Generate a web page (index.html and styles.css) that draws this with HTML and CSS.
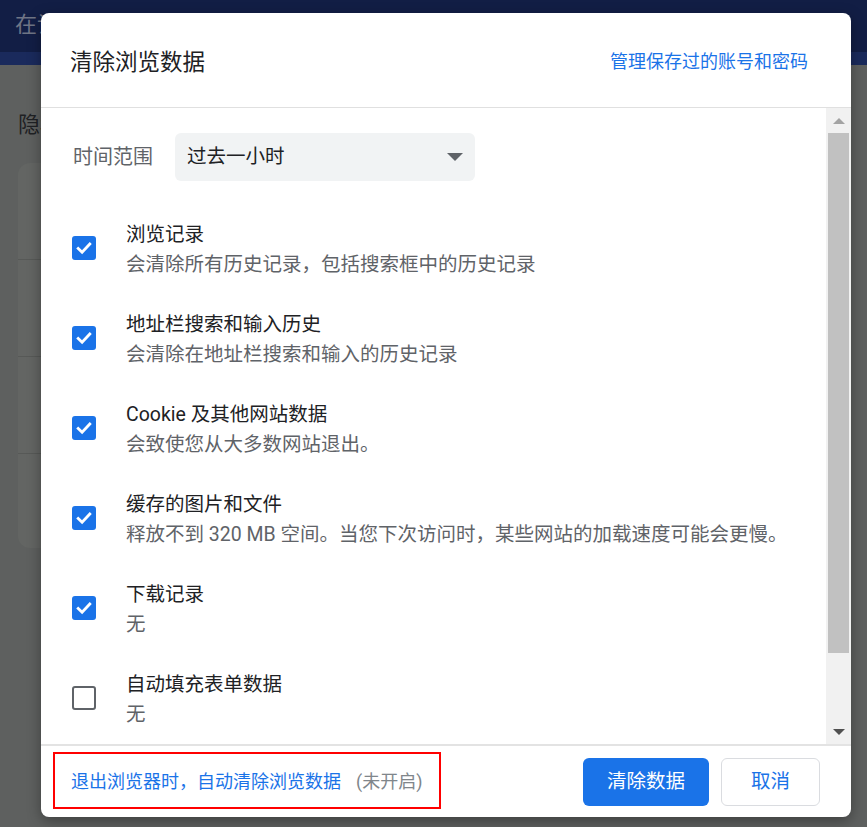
FILE: index.html
```html
<!DOCTYPE html>
<html lang="zh-CN">
<head>
<meta charset="utf-8">
<title>清除浏览数据</title>
<link rel="stylesheet" href="styles.css">
</head>
<body>
<div class="page">
  <header class="topbar"><span class="search-hint">在设</span></header>
  <div class="topbar-strip"></div>
  <main class="content">
    <h2 class="section-title">隐私和安全</h2>
    <div class="card">
      <div class="card-row"></div>
      <div class="card-row"></div>
      <div class="card-row"></div>
      <div class="card-row last"></div>
    </div>
  </main>
</div>

<div class="dialog" role="dialog">
  <div class="dialog-header">
    <h1 class="dialog-title">清除浏览数据</h1>
    <a class="header-link">管理保存过的账号和密码</a>
  </div>

  <div class="dialog-body">
    <div class="scroll-content">
      <div class="time-row">
        <span class="time-label">时间范围</span>
        <div class="select">
          <span>过去一小时</span>
          <span class="select-arrow"></span>
        </div>
      </div>

      <div class="items">
        <div class="item">
          <span class="checkbox checked"><svg viewBox="0 0 24 24" width="24" height="24"><path d="M6.2 12.4l3.9 3.8 7.7-8.2" fill="none" stroke="#fff" stroke-width="2.8" stroke-linecap="square"/></svg></span>
          <div class="item-text">
            <div class="item-title">浏览记录</div>
            <div class="item-sub">会清除所有历史记录，包括搜索框中的历史记录</div>
          </div>
        </div>
        <div class="item">
          <span class="checkbox checked"><svg viewBox="0 0 24 24" width="24" height="24"><path d="M6.2 12.4l3.9 3.8 7.7-8.2" fill="none" stroke="#fff" stroke-width="2.8" stroke-linecap="square"/></svg></span>
          <div class="item-text">
            <div class="item-title">地址栏搜索和输入历史</div>
            <div class="item-sub">会清除在地址栏搜索和输入的历史记录</div>
          </div>
        </div>
        <div class="item">
          <span class="checkbox checked"><svg viewBox="0 0 24 24" width="24" height="24"><path d="M6.2 12.4l3.9 3.8 7.7-8.2" fill="none" stroke="#fff" stroke-width="2.8" stroke-linecap="square"/></svg></span>
          <div class="item-text">
            <div class="item-title">Cookie 及其他网站数据</div>
            <div class="item-sub">会致使您从大多数网站退出。</div>
          </div>
        </div>
        <div class="item">
          <span class="checkbox checked"><svg viewBox="0 0 24 24" width="24" height="24"><path d="M6.2 12.4l3.9 3.8 7.7-8.2" fill="none" stroke="#fff" stroke-width="2.8" stroke-linecap="square"/></svg></span>
          <div class="item-text">
            <div class="item-title">缓存的图片和文件</div>
            <div class="item-sub">释放不到 320 MB 空间。当您下次访问时，某些网站的加载速度可能会更慢。</div>
          </div>
        </div>
        <div class="item">
          <span class="checkbox checked"><svg viewBox="0 0 24 24" width="24" height="24"><path d="M6.2 12.4l3.9 3.8 7.7-8.2" fill="none" stroke="#fff" stroke-width="2.8" stroke-linecap="square"/></svg></span>
          <div class="item-text">
            <div class="item-title">下载记录</div>
            <div class="item-sub">无</div>
          </div>
        </div>
        <div class="item">
          <span class="checkbox"></span>
          <div class="item-text">
            <div class="item-title">自动填充表单数据</div>
            <div class="item-sub">无</div>
          </div>
        </div>
      </div>
    </div>

    <div class="scrollbar">
      <div class="sb-button"><span class="sb-arrow up"></span></div>
      <div class="sb-track"><div class="sb-thumb"></div></div>
      <div class="sb-button"><span class="sb-arrow down"></span></div>
    </div>
  </div>

  <div class="dialog-footer">
    <div class="highlight">
      <a class="footer-link">退出浏览器时，自动清除浏览数据</a>
      <span class="footer-state">(未开启)</span>
    </div>
    <div class="buttons">
      <button class="btn btn-primary">清除数据</button>
      <button class="btn btn-secondary">取消</button>
    </div>
  </div>
</div>
</body>
</html>
```

FILE: styles.css
```css
* { box-sizing: border-box; }

html, body {
  margin: 0;
  padding: 0;
}

body {
  width: 867px;
  height: 827px;
  overflow: hidden;
  position: relative;
  background: #5e605f;
  font-family: Roboto, "Noto Sans CJK SC", sans-serif;
}

/* ---------- dimmed page behind ---------- */
.page {
  display: flex;
  flex-direction: column;
}

.topbar {
  height: 52px;
  background: #121e45;
  padding-left: 15px;
  display: flex;
  align-items: flex-start;
  overflow: hidden;
}

.search-hint {
  color: #6f7585;
  font-size: 22px;
  line-height: 50px;
}

.topbar-strip {
  height: 13px;
  background: #1a2a5c;
}

.content {
  padding: 0 18px;
}

.section-title {
  margin: 45px 0 0;
  font-weight: normal;
  font-size: 22px;
  line-height: 30px;
  color: #1f2124;
}

.card {
  margin-top: 23px;
  width: 831px;
  height: 385px;
  background: #636563;
  border-radius: 12px;
  display: flex;
  flex-direction: column;
}

.card-row {
  height: 97px;
  border-bottom: 1px solid #575957;
}

.card-row.last {
  border-bottom: none;
  flex: 1;
}

/* ---------- dialog ---------- */
.dialog {
  position: absolute;
  left: 41px;
  top: 13px;
  width: 810px;
  height: 804px;
  background: #fff;
  border-radius: 8px;
  box-shadow: 0 4px 14px rgba(0, 0, 0, 0.35);
  display: flex;
  flex-direction: column;
  overflow: hidden;
}

.dialog-header {
  height: 95px;
  flex: none;
  border-bottom: 1px solid #e0e0e0;
  display: flex;
  align-items: center;
  justify-content: space-between;
  padding: 4px 43px 0 29px;
}

.dialog-title {
  margin: 0;
  font-weight: normal;
  font-size: 22.5px;
  line-height: 30px;
  color: #202124;
}

.header-link {
  font-size: 18px;
  line-height: 26px;
  color: #1a73e8;
}

.dialog-body {
  flex: 1;
  min-height: 0;
  display: flex;
}

.scroll-content {
  flex: 1;
  overflow: hidden;
  padding: 25px 0 0 30px;
}

.time-row {
  display: flex;
  align-items: center;
  gap: 22px;
  height: 48px;
}

.time-label {
  margin-left: 2px;
  font-size: 20px;
  line-height: 28px;
  color: #5f6368;
}

.select {
  width: 300px;
  height: 48px;
  background: #f1f3f4;
  border-radius: 6px;
  display: flex;
  align-items: center;
  justify-content: space-between;
  padding: 0 12px;
  font-size: 19.5px;
  line-height: 28px;
  color: #202124;
}

.select-arrow {
  width: 0;
  height: 0;
  border-left: 8px solid transparent;
  border-right: 8px solid transparent;
  border-top: 8px solid #5f6368;
}

.items {
  margin-top: 22px;
  display: flex;
  flex-direction: column;
}

.item {
  height: 90px;
  display: flex;
  align-items: center;
  gap: 30px;
}

.checkbox {
  width: 24px;
  height: 24px;
  flex: none;
  border-radius: 3px;
  border: 2.5px solid #5f6368;
  margin-left: 1px;
  display: flex;
}

.checkbox.checked {
  border: none;
  background: #1a73e8;
}

.item-text {
  display: flex;
  flex-direction: column;
  margin-top: 3px;
}

.item-title {
  font-size: 19.5px;
  line-height: 30px;
  color: #202124;
}

.item-sub {
  font-size: 19.5px;
  line-height: 30px;
  color: #5f6368;
}

/* custom scrollbar drawing */
.scrollbar {
  width: 25px;
  flex: none;
  background: #f1f1f1;
  display: flex;
  flex-direction: column;
}

.sb-button {
  height: 25px;
  flex: none;
  display: flex;
  align-items: center;
  justify-content: center;
}

.sb-arrow {
  width: 0;
  height: 0;
  border-left: 6px solid transparent;
  border-right: 6px solid transparent;
}

.sb-arrow.up {
  border-bottom: 6px solid #a3a3a3;
}

.sb-arrow.down {
  border-top: 6px solid #505050;
}

.sb-track {
  flex: 1;
  padding: 0 2px;
}

.sb-thumb {
  height: 520px;
  background: #c1c1c1;
}

/* footer */
.dialog-footer {
  height: 73px;
  flex: none;
  border-top: 2px solid #e3e3e3;
  display: flex;
  align-items: center;
  justify-content: space-between;
  padding: 0 31px 0 12px;
}

.highlight {
  height: 57px;
  margin-top: -3px;
  border: 2px solid #ff0000;
  display: flex;
  align-items: center;
  padding: 4px 17px 0 16px;
  font-size: 18px;
  line-height: 26px;
}

.footer-link {
  color: #1a73e8;
}

.footer-state {
  margin-left: 15px;
  color: #80868b;
}

.buttons {
  display: flex;
  gap: 12px;
}

.btn {
  height: 48px;
  border-radius: 6px;
  font-family: Roboto, "Noto Sans CJK SC", sans-serif;
  font-size: 19.5px;
  line-height: 28px;
  padding-top: 2px;
  cursor: pointer;
}

.btn-primary {
  width: 126px;
  background: #1a73e8;
  border: none;
  color: #fff;
}

.btn-secondary {
  width: 99px;
  background: #fff;
  border: 1px solid #dadce0;
  color: #1a73e8;
}
```
